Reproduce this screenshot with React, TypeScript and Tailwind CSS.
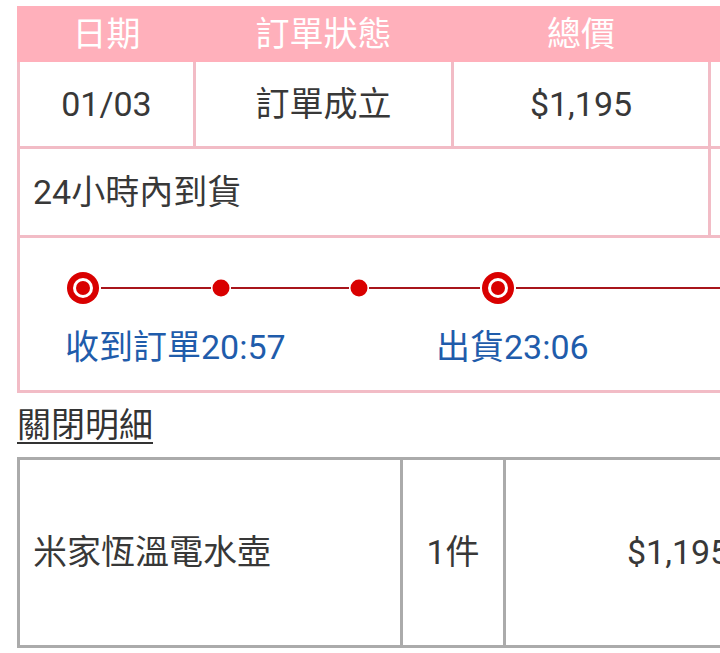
import React from 'react';

const font = 'font-["Roboto","Noto_Sans_CJK_TC",sans-serif]';

// timeline nodes, x relative to the cell's inner left edge
const nodes = [
  { x: 63, big: true },
  { x: 201, big: false },
  { x: 339, big: false },
  { x: 478, big: true },
];

const Timeline: React.FC = () => {
  const segs: { x1: number; x2: number }[] = [];
  nodes.forEach((n, i) => {
    const r = n.big ? 18 : 10;
    const next = nodes[i + 1];
    if (next) {
      const nr = next.big ? 18 : 10;
      segs.push({ x1: n.x + r, x2: next.x - nr });
    } else {
      segs.push({ x1: n.x + r, x2: 760 });
    }
  });

  return (
    <svg width="760" height="89" className="block">
      {segs.map((s, i) => (
        <line key={i} x1={s.x1} x2={s.x2} y1="50" y2="50" stroke="#a8151b" strokeWidth="2" />
      ))}
      {nodes.map((n, i) =>
        n.big ? (
          <g key={i}>
            <circle cx={n.x} cy="50" r="16" fill="#d90000" />
            <circle cx={n.x} cy="50" r="10" fill="#ffffff" />
            <circle cx={n.x} cy="50" r="7" fill="#d90000" />
          </g>
        ) : (
          <circle key={i} cx={n.x} cy="50" r="8.5" fill="#d90000" />
        )
      )}
    </svg>
  );
};

const App: React.FC = () => {
  return (
    <div className={`w-[720px] h-[653px] overflow-hidden bg-white ${font}`}>
      <div className="w-[800px] pl-[17px] pt-[6px]">
        {/* order table */}
        <div className="grid grid-cols-[173px_255px_254px_120px] gap-[3px] bg-[#f2bcc6] pl-[3px] pb-[3px] text-[34px] text-[#383838]">
          <div className="h-[56px] -ml-[3px] pl-[3px] bg-[#ffb0bb] text-white flex items-center justify-center">日期</div>
          <div className="h-[56px] -ml-[3px] pl-[3px] bg-[#ffb0bb] text-white flex items-center justify-center">訂單狀態</div>
          <div className="h-[56px] -ml-[3px] pl-[3px] bg-[#ffb0bb] text-white flex items-center justify-center">總價</div>
          <div className="h-[56px] -ml-[3px] pl-[3px] bg-[#ffb0bb]" />

          <div className="h-[84px] -mt-[3px] bg-white flex items-center justify-center">01/03</div>
          <div className="h-[84px] -mt-[3px] bg-white flex items-center justify-center">訂單成立</div>
          <div className="h-[84px] -mt-[3px] bg-white flex items-center justify-center">$1,195</div>
          <div className="h-[84px] -mt-[3px] bg-white" />

          <div className="col-span-3 h-[86px] bg-white flex items-center pl-[13px]">24小時內到貨</div>
          <div className="h-[86px] bg-white" />

          <div className="col-span-4 h-[152px] bg-white overflow-hidden">
            <Timeline />
            <div className="flex text-[#1f5cab] leading-[40px] whitespace-nowrap">
              <span className="pl-[45px] w-[416px]">收到訂單20:57</span>
              <span>出貨23:06</span>
            </div>
          </div>
        </div>

        <div className="mt-[10px] text-[34px] leading-[44px] text-[#333] underline underline-offset-[5px] decoration-2 w-fit">
          關閉明細
        </div>

        {/* item table */}
        <div className="mt-[10px] grid grid-cols-[380px_100px_240px] gap-[3px] bg-[#ababab] p-[3px] text-[34px] text-[#383838]">
          <div className="h-[185px] bg-white flex items-center pl-[13px]">米家恆溫電水壺</div>
          <div className="h-[185px] bg-white flex items-center justify-center">1件</div>
          <div className="h-[185px] bg-white flex items-center pl-[121px]">$1,195</div>
        </div>
      </div>
    </div>
  );
};

export default App;
